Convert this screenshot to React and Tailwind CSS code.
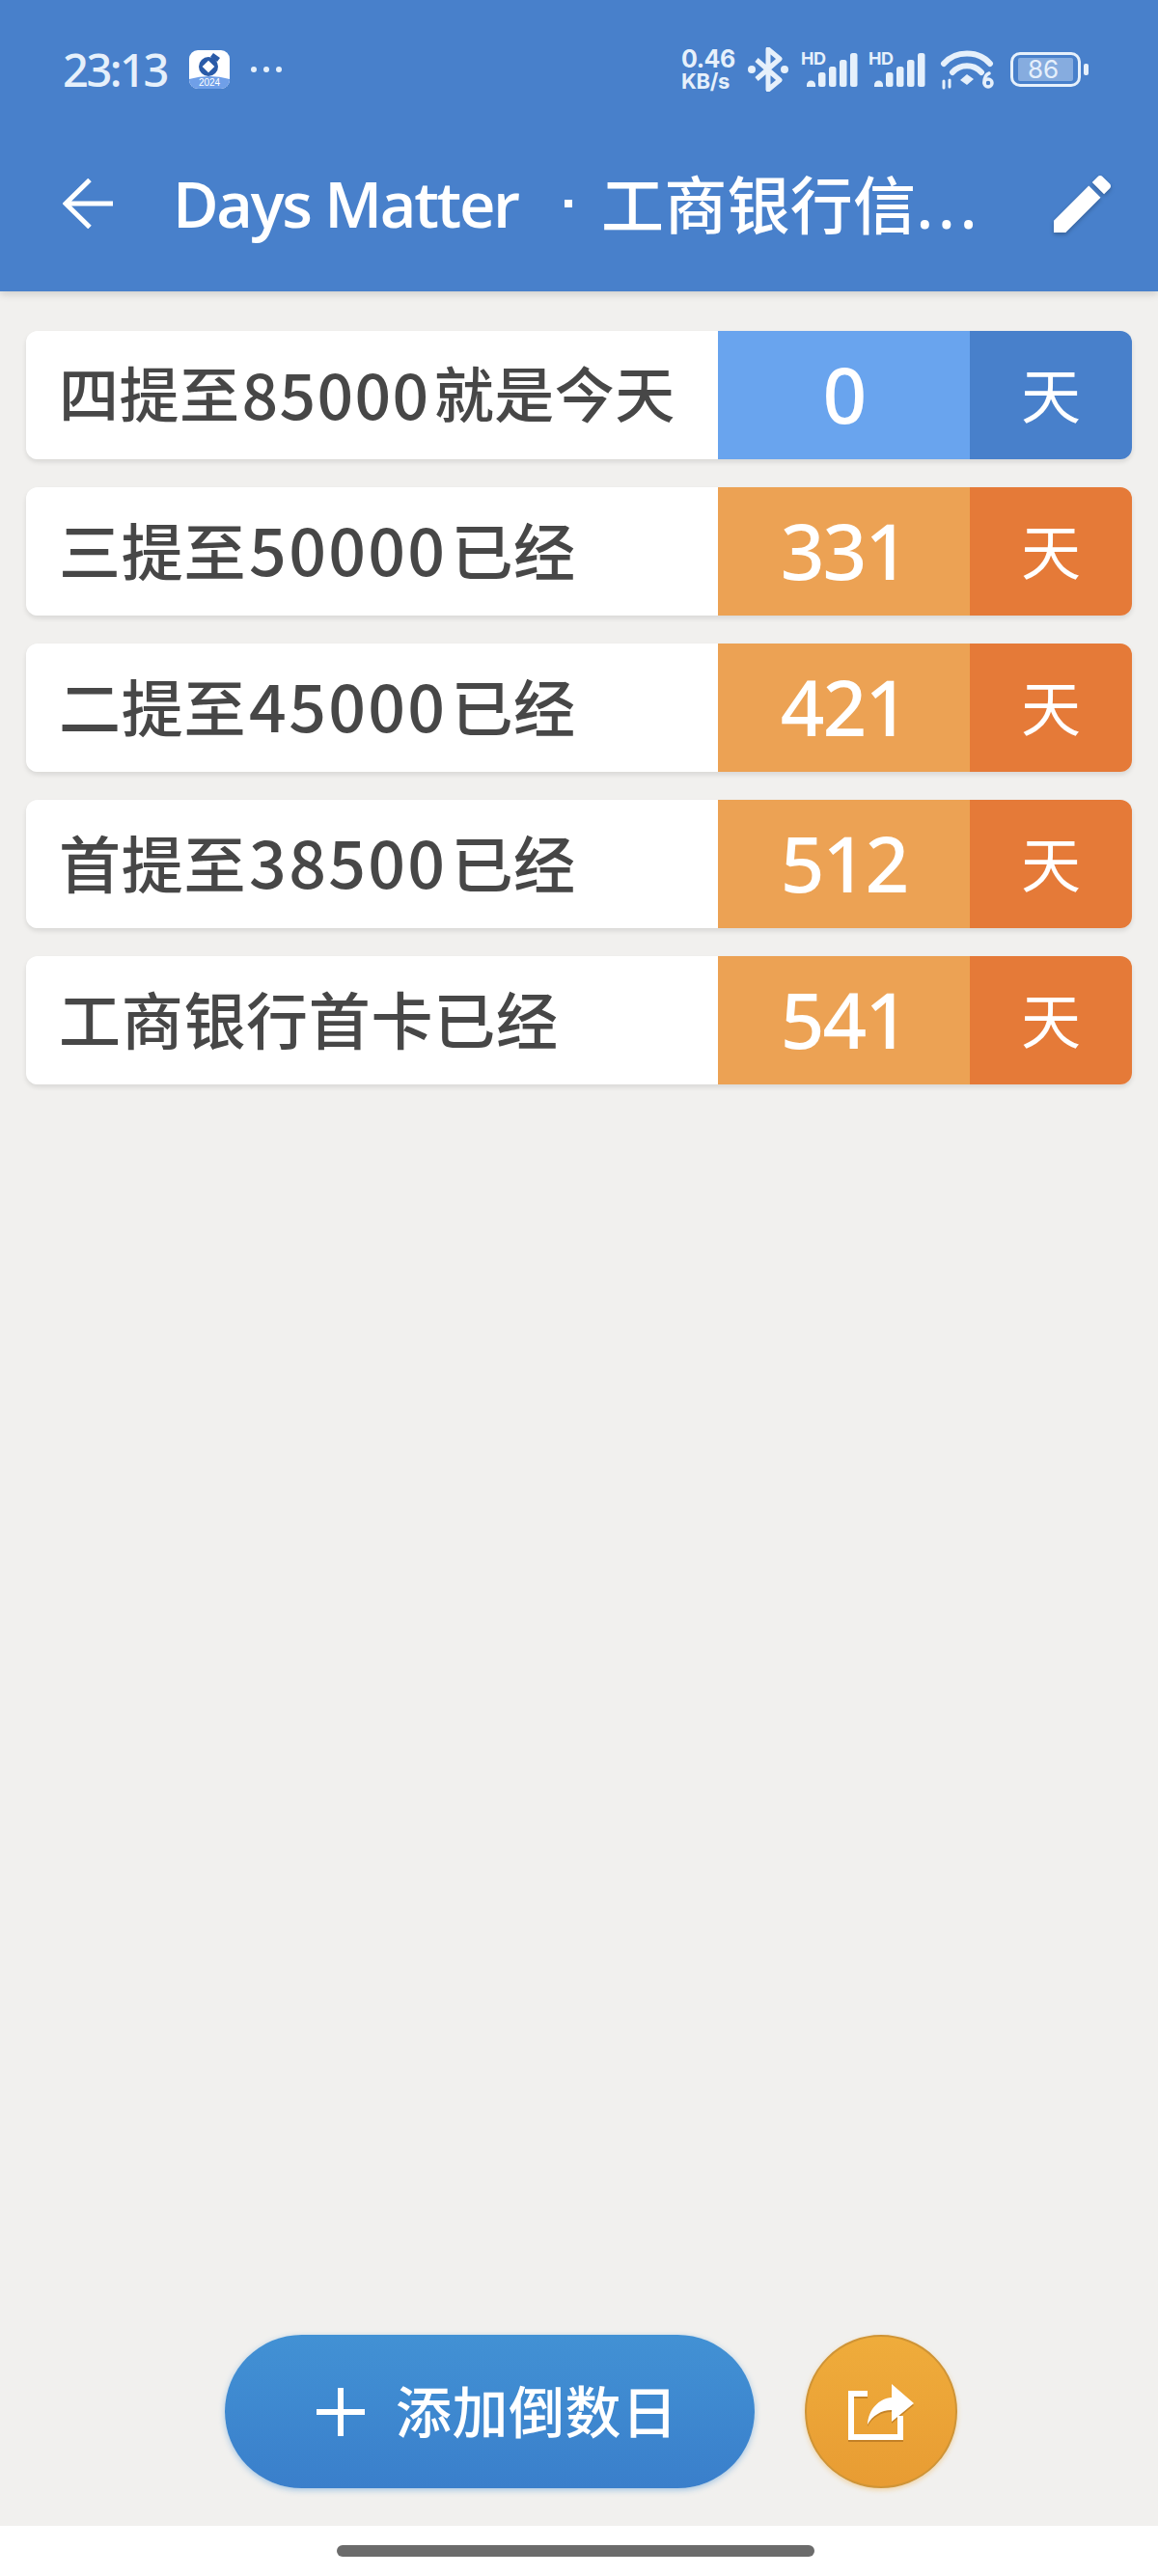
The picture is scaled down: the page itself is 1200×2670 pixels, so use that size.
import React from "react";

const rows = [
  { title: "四提至85000就是今天", days: "0", tone: "blue" },
  { title: "三提至50000已经", days: "331", tone: "orange" },
  { title: "二提至45000已经", days: "421", tone: "orange" },
  { title: "首提至38500已经", days: "512", tone: "orange" },
  { title: "工商银行首卡已经", days: "541", tone: "orange" },
];

const Signal = () => (
  <div className="relative w-[59px] h-[36px]">
    <span className="absolute left-0 -top-[1px] text-[18px] leading-[16px] font-bold text-[#e6f0fb] font-['Inter',sans-serif] tracking-[-0.5px]">
      HD
    </span>
    <svg viewBox="0 0 59 36" className="w-[59px] h-[36px]" fill="#e6f0fb">
      <path d="M6 34a4.5 4.5 0 0 1 9 0v2H6z" />
      <rect x="18" y="21" width="7.5" height="15" rx="2.5" />
      <rect x="29" y="15" width="7.5" height="21" rx="2.5" />
      <rect x="40" y="8" width="7.5" height="28" rx="2.5" />
      <rect x="51" y="1" width="7.5" height="35" rx="2.5" />
    </svg>
  </div>
);

const Row = ({ title, days, tone }) => {
  const blue = tone === "blue";
  // the first title is long and sits a little tighter in the reference
  const parts = title.split(/(\d+)/);
  return (
    <div className="flex h-[133px] rounded-[12px] overflow-hidden shadow-[0_3px_5px_rgba(0,0,0,0.1)]">
      <div
        className={`flex-1 bg-white flex items-center pl-[34px] text-[#474747] font-medium font-['Noto_Sans_CJK_SC',sans-serif] pb-[7px] ${
          blue ? "text-[62px] tracking-[0.5px]" : "text-[64px] tracking-[0.7px]"
        }`}
      >
        {parts.map((part, i) =>
          /\d/.test(part) ? (
            <span key={i} className={blue ? "text-[66px] tracking-[1.4px] ml-[2px] mr-[4px]" : "text-[68px] tracking-[2.3px] ml-[3px] mr-[4px]"}>
              {part}
            </span>
          ) : (
            <span key={i}>{part}</span>
          )
        )}
      </div>
      <div
        className={`w-[261px] flex items-center justify-center pb-[3px] text-white text-[80px] font-medium tracking-[-2px] font-['Noto_Sans',sans-serif] ${
          blue ? "bg-[#69a4ee]" : "bg-[#eca254]"
        }`}
      >
        {days}
      </div>
      <div
        className={`w-[168px] flex items-center justify-center pb-[5px] text-white text-[62px] font-['Noto_Sans_CJK_SC',sans-serif] ${
          blue ? "bg-[#4880cb]" : "bg-[#e57a38]"
        }`}
      >
        天
      </div>
    </div>
  );
};

const App = () => {
  return (
    <div className="w-[1200px] h-[2670px] flex flex-col bg-[#f1f0ee] font-['Noto_Sans',sans-serif]">
      <header className="h-[302px] shrink-0 bg-[#4880cb] shadow-[0_3px_8px_rgba(0,0,0,0.14)]">
        <div className="h-[144px] flex items-center pl-[65px] text-[#e6f0fb]">
          <span className="text-[47px] leading-none w-[131px] font-medium font-['Noto_Sans',sans-serif] tracking-[-2.5px]">23:13</span>
          <div className="relative w-[42px] h-[40px] rounded-[9px] bg-white overflow-hidden">
            <svg viewBox="0 0 42 40" className="w-[42px] h-[40px]">
              <circle cx="20" cy="17" r="10" fill="#2a5ba8" />
              <rect x="15.5" y="12.5" width="9" height="9" fill="#fff" transform="rotate(45 20 17)" />
              <path d="M25 3l7 5-3 4-7-5z" fill="#2a5ba8" />
              <path d="M0 30q21-6 42 0v10H0z" fill="#6f9fe8" />
            </svg>
            <span className="absolute inset-x-0 bottom-[1px] text-center text-[10px] leading-[10px] text-white font-['Liberation_Sans',sans-serif]">
              2024
            </span>
          </div>
          <div className="ml-[22px] flex gap-[7px]">
            <span className="w-[6px] h-[6px] rounded-full bg-[#e6f0fb]" />
            <span className="w-[6px] h-[6px] rounded-full bg-[#e6f0fb]" />
            <span className="w-[6px] h-[6px] rounded-full bg-[#e6f0fb]" />
          </div>
          <div className="ml-auto mr-[80px] flex items-center">
            <div className="w-[58px] font-bold font-['Inter',sans-serif] text-[#e6f0fb]">
              <div className="text-[25px] leading-[24px] tracking-[-0.5px]">0.46</div>
              <div className="text-[22px] leading-[22px] tracking-[-0.3px]">KB/s</div>
            </div>
            <svg viewBox="0 0 42 46" className="ml-[11px] w-[42px] h-[46px]" fill="none" stroke="#e6f0fb" strokeWidth="5" strokeLinejoin="round">
              <path d="M9 13l24 21-12 10V2l12 10L9 33" />
              <circle cx="4" cy="23" r="4" fill="#e6f0fb" stroke="none" />
              <circle cx="38" cy="23" r="4" fill="#e6f0fb" stroke="none" />
            </svg>
            <div className="ml-[13px] flex gap-[11px]">
              <Signal />
              <Signal />
            </div>
            <svg viewBox="0 0 56 42" className="ml-[15px] w-[56px] h-[42px]" fill="none" stroke="#e6f0fb" strokeLinecap="round">
              <path d="M4 15C16 1 40 1 52 15" strokeWidth="6" />
              <path d="M13 24C21 15 35 15 43 24" strokeWidth="6" />
              <path d="M28 26l7 5-7 6-7-5z" fill="#e6f0fb" stroke="none" />
              <path d="M4 33v7M10 32v7" strokeWidth="3" />
              <circle cx="50" cy="35" r="4" strokeWidth="3.5" />
              <path d="M46 35c0-5 2-9 5-10" strokeWidth="3.5" />
            </svg>
            <div className="ml-[17px] relative w-[73px] h-[36px] rounded-[10px] border-[3px] border-[#e6f0fb] flex items-center pl-[5px]">
              <div className="w-[57px] h-[24px] bg-[#86acdf] rounded-[2px]" />
              <span className="absolute left-[15px] top-[1px] text-[26px] leading-[28px] text-[#e6f0fb] font-['Inter',sans-serif]">86</span>
              <span className="absolute -right-[11px] top-[9px] w-[5px] h-[12px] rounded-[2px] bg-[#e6f0fb]" />
            </div>
          </div>
        </div>
        <div className="h-[134px] flex items-center pl-[65px] text-white">
          <svg viewBox="0 0 52 52" className="w-[52px] h-[52px]" fill="none" stroke="#fff" strokeWidth="5">
            <path d="M52 26H3M28 1.5L3 26l25 24.5" />
          </svg>
          <span className="ml-[62px] text-[65px] leading-none font-semibold tracking-[-2.3px] font-['Open_Sans',sans-serif]">
            Days Matter
          </span>
          <span className="ml-[48px] w-[8px] h-[8px] bg-white" />
          <span className="ml-[30px] text-[65px] leading-none tracking-[0.3px] font-medium font-['Noto_Sans_CJK_SC',sans-serif]">
            工商银行信<span className="tracking-[5px] font-['Noto_Sans',sans-serif]">...</span>
          </span>
          <svg viewBox="3 3 18 18" className="ml-auto mr-[49px] w-[59px] h-[59px] drop-shadow-[0_2px_2px_rgba(0,0,0,0.25)]" fill="#fff">
            <path d="M3 17.25V21h3.75L17.81 9.94l-3.75-3.75L3 17.25zM20.71 7.04c.39-.39.39-1.02 0-1.41l-2.34-2.34c-.39-.39-1.02-.39-1.41 0l-1.83 1.83 3.75 3.75 1.83-1.83z" />
          </svg>
        </div>
      </header>

      <main className="flex-1 flex flex-col px-[27px] pt-[41px] gap-[29px]">
        {rows.map((row) => (
          <Row key={row.days} title={row.title} days={row.days} tone={row.tone} />
        ))}
        <div className="mt-auto mb-[39px] pl-[206px] flex gap-[52px]">
          <button className="w-[549px] h-[159px] rounded-full bg-gradient-to-b from-[#4291d4] to-[#3a7fcb] shadow-[0_2px_6px_rgba(66,145,212,0.45)] flex items-center pl-[95px] text-white">
            <svg viewBox="0 0 50 50" className="w-[50px] h-[50px]" fill="#fff">
              <path d="M22 0h6v22h22v6H28v22h-6V28H0v-6h22z" />
            </svg>
            <span className="ml-[32px] text-[58px] leading-none tracking-[0.5px] font-medium font-['Noto_Sans_CJK_SC',sans-serif] pb-[5px]">添加倒数日</span>
          </button>
          <button className="w-[158px] h-[159px] rounded-full border-2 border-[#cf9436] bg-gradient-to-b from-[#efac3b] to-[#e89c33] shadow-[0_2px_5px_rgba(240,170,60,0.4)] flex items-center justify-center">
            <svg viewBox="0 0 70 58" className="w-[70px] h-[58px] drop-shadow-[0_2px_0_rgba(150,90,20,0.45)]">
              <path d="M21 10H4v45h51V33" fill="none" stroke="#fff" strokeWidth="6" />
              <path d="M21 42C22 26 33 15 46 14V0l23 20-23 19V27c-11 0-20 6-25 15z" fill="#fff" />
            </svg>
          </button>
        </div>
      </main>

      <footer className="h-[52px] shrink-0 bg-white flex justify-center pt-[20px] pr-[8px]">
        <div className="w-[495px] h-[12px] rounded-full bg-[#6b6b6b]" />
      </footer>
    </div>
  );
};

export default App;
